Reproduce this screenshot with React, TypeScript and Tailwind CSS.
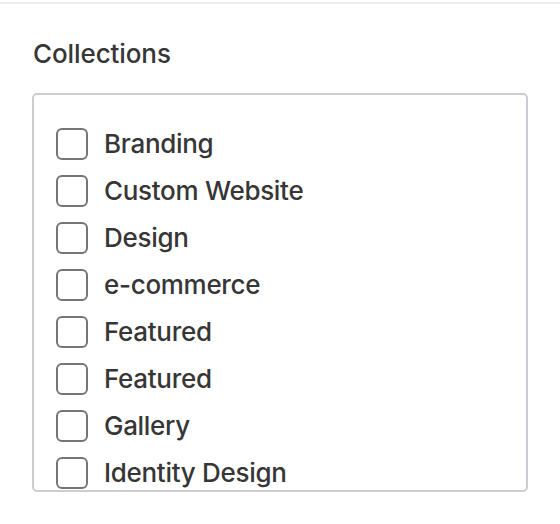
import React from "react";

const collections = [
  "Branding",
  "Custom Website",
  "Design",
  "e-commerce",
  "Featured",
  "Featured",
  "Gallery",
  "Identity Design",
];

function CollectionRow({ label }: { label: string }) {
  return (
    <label className="flex h-[32px] flex-shrink-0 items-center gap-[16px]">
      {/* Unchecked box */}
      <span className="h-[32px] w-[32px] flex-shrink-0 rounded-[6px] border-2 border-[#757575] bg-white" />
      <span className="text-[26px] font-[450] leading-[32px] tracking-[-0.3px] text-[#363636]">
        {label}
      </span>
    </label>
  );
}

export default function App() {
  return (
    <div
      className="h-[524px] w-full bg-white"
      style={{ fontFamily: "Inter, 'Noto Sans', 'Liberation Sans', sans-serif" }}
    >
      <div className="mt-[2px] border-t-2 border-[#ededf1] px-[32px] pt-[34px]">
        {/* Panel heading */}
        <h2 className="pl-[1px] text-[26px] font-[450] leading-[32px] tracking-[-0.1px] text-[#363636]">
          Collections
        </h2>

        {/* Scrollable checklist */}
        <div className="mt-[23px] h-[399px] w-[496px] overflow-hidden rounded-[5px] border-2 border-[#cbcdd1]">
          <div className="flex flex-col gap-[15px] pl-[22px] pt-[33px]">
            {collections.map((name, i) => (
              <CollectionRow key={i} label={name} />
            ))}
          </div>
        </div>
      </div>
    </div>
  );
}
